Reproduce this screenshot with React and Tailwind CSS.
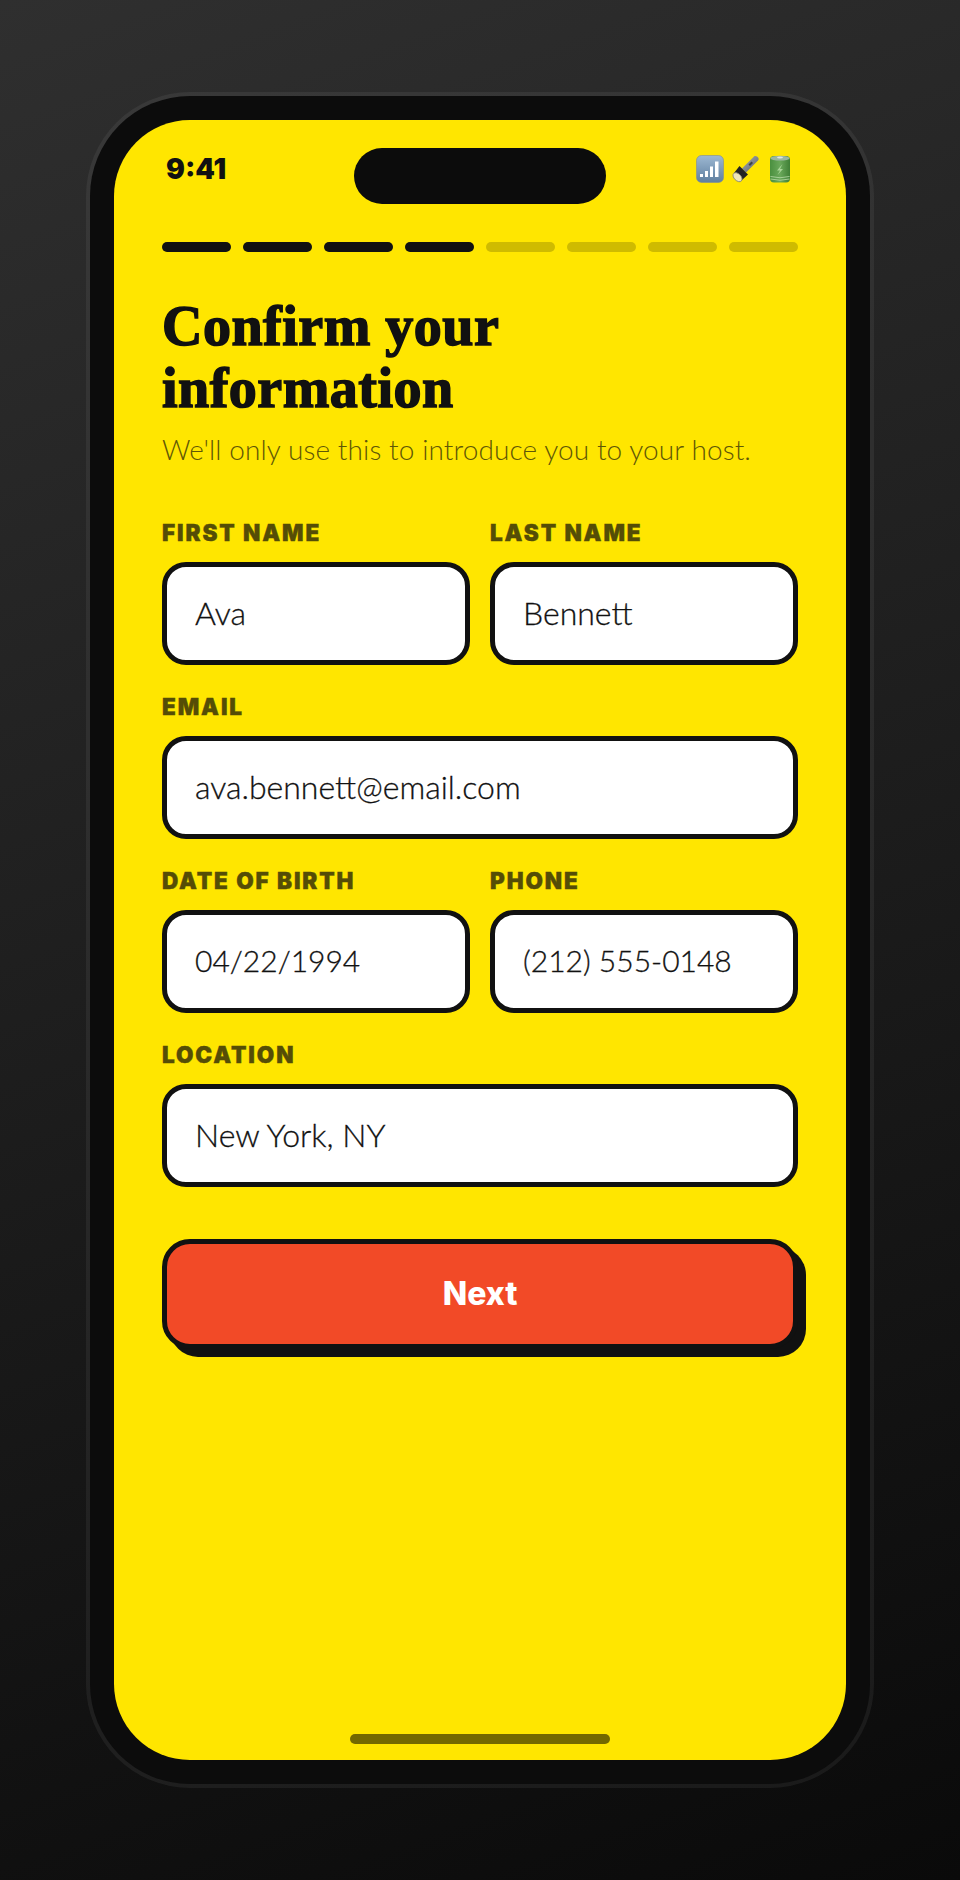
import { useState } from "react";

const steps = [true, true, true, true, false, false, false, false];

function SignalIcon() {
  return (
    <svg width="28" height="28" viewBox="0 0 28 28">
      <defs>
        <linearGradient id="sig" x1="0" y1="0" x2="0" y2="1">
          <stop offset="0" stopColor="#9db8d2" />
          <stop offset="1" stopColor="#5f7f9f" />
        </linearGradient>
      </defs>
      <rect x="0.5" y="0.5" width="27" height="27" rx="5" fill="url(#sig)" stroke="#7d8c9c" strokeWidth="0.6" />
      <rect x="4" y="19" width="3" height="3" fill="#fff" />
      <rect x="9" y="16" width="3" height="6" fill="#fff" />
      <rect x="14" y="11.5" width="3" height="10.5" fill="#fff" />
      <rect x="19" y="6.5" width="3.5" height="15.5" fill="#fff" />
    </svg>
  );
}

function FlashlightIcon() {
  return (
    <svg width="28" height="28" viewBox="0 0 28 28">
      <defs>
        <linearGradient id="torch" x1="0" y1="0" x2="1" y2="1">
          <stop offset="0" stopColor="#a9aeb4" />
          <stop offset="1" stopColor="#596068" />
        </linearGradient>
      </defs>
      <path d="M11 13.5 L23.5 1 Q26 0.5 27.5 3 Q28 4.5 27 5.5 L15 17.5 Z" fill="url(#torch)" />
      <path d="M17.5 9.5 L20.5 6.5 L22 8 L19 11 Z" fill="#3f444a" />
      <path d="M8.5 11 L17 19.5 L10.5 25.5 L3 18 Z" fill="#232323" />
      <ellipse cx="6.5" cy="22.2" rx="5.4" ry="3.4" fill="#efe7b9" stroke="#8b8a7c" strokeWidth="0.9" transform="rotate(45 6.5 22.2)" />
    </svg>
  );
}

function BatteryIcon() {
  return (
    <svg width="28" height="28" viewBox="0 0 28 28">
      <defs>
        <linearGradient id="batt" x1="0" y1="0" x2="1" y2="0">
          <stop offset="0" stopColor="#4a8f3f" />
          <stop offset="0.5" stopColor="#6aa85a" />
          <stop offset="1" stopColor="#3f7f36" />
        </linearGradient>
      </defs>
      <rect x="4" y="1" width="20" height="26.5" rx="4" fill="url(#batt)" />
      <ellipse cx="14" cy="3.2" rx="9.5" ry="2.4" fill="#9bb7a0" />
      <ellipse cx="14" cy="2.6" rx="3" ry="1" fill="#dfe6df" />
      <path d="M16.5 9 L11 15.5 L14 15.5 L11.5 20 L17 14 L14 14 Z" fill="#a8d497" />
      <path d="M4.5 21.5 Q14 24 23.5 21.5 M4.5 24 Q14 26.5 23.5 24" fill="none" stroke="#b9dbaa" strokeWidth="0.8" />
    </svg>
  );
}

function Field({ label, value, onChange, digits }) {
  return (
    <label className="block min-w-0 flex-1">
      <span className="mb-[14px] block font-['Inter',sans-serif] text-[22.5px] leading-[30px] font-black tracking-[1.9px] text-[#554d06] uppercase [-webkit-text-stroke:0.4px_#554d06]">
        {label}
      </span>
      <input
        value={value}
        onChange={(e) => onChange(e.target.value)}
        className={
          digits
            ? "h-[103px] w-full rounded-[24px] border-[5px] border-[#111] bg-white px-[28px] pb-[3px] text-[30px] font-light text-[#111] outline-none [-webkit-text-stroke:0.3px_#111]"
            : "h-[103px] w-full rounded-[24px] border-[5px] border-[#111] bg-white px-[28px] pb-[3px] text-[32px] font-light text-[#111] outline-none [-webkit-text-stroke:0.3px_#111]"
        }
      />
    </label>
  );
}

export default function App() {
  const [form, setForm] = useState({
    first: "Ava",
    last: "Bennett",
    email: "ava.bennett@email.com",
    dob: "04/22/1994",
    phone: "(212) 555-0148",
    location: "New York, NY",
  });

  const set = (field) => (value) => setForm((prev) => ({ ...prev, [field]: value }));

  return (
    <div className="flex min-h-[1880px] items-center justify-center bg-[linear-gradient(160deg,#2f2f2f_0%,#0a0a0a_100%)] font-['Lato',sans-serif]">
      <div className="h-[1688px] w-[780px] rounded-[100px] bg-[#0c0c0c] p-[24px] shadow-[0_0_0_4px_rgba(255,255,255,0.06)]">
        <div className="relative flex h-full flex-col overflow-hidden rounded-[76px] bg-[#ffe600] px-[48px]">
          <div className="absolute top-[28px] left-[240px] h-[56px] w-[252px] rounded-full bg-[#0c0c0c]" />

          <div className="flex h-[98px] items-center justify-between pr-[4px] pl-[4px]">
            <span className="font-['Inter',sans-serif] text-[28px] leading-none font-black text-[#111]">9:41</span>
            <div className="flex items-center gap-[7px]">
              <SignalIcon />
              <FlashlightIcon />
              <BatteryIcon />
            </div>
          </div>

          <div className="mt-[24px] flex gap-[12px]">
            {steps.map((done, i) => (
              <div
                key={i}
                className={done ? "h-[10px] flex-1 rounded-full bg-[#111]" : "h-[10px] flex-1 rounded-full bg-[#cfbb00]"}
              />
            ))}
          </div>

          <h1 className="mt-[43px] font-['Liberation_Serif',serif] text-[56px] leading-[62px] font-bold tracking-[0.5px] text-[#111] [-webkit-text-stroke:1.5px_#111]">
            Confirm your
            <br />
            information
          </h1>
          <p className="mt-[11px] text-[28px] leading-[38px] font-light tracking-[0.1px] text-[#5f5706]">
            We'll only use this to introduce you to your host.
          </p>

          <div className="mt-[50px] flex flex-col gap-[27px]">
            <div className="flex gap-[20px]">
              <Field label="First name" value={form.first} onChange={set("first")} />
              <Field label="Last name" value={form.last} onChange={set("last")} />
            </div>
            <Field label="Email" value={form.email} onChange={set("email")} />
            <div className="flex gap-[20px]">
              <Field label="Date of birth" value={form.dob} onChange={set("dob")} digits />
              <Field label="Phone" value={form.phone} onChange={set("phone")} digits />
            </div>
            <Field label="Location" value={form.location} onChange={set("location")} />
          </div>

          <button
            type="button"
            className="mt-[52px] h-[110px] w-full rounded-[28px] border-[5px] border-[#111] bg-[#f24a27] font-['Inter',sans-serif] text-[32px] font-extrabold text-white shadow-[8px_8px_0_#111]"
          >
            Next
          </button>

          <div className="absolute bottom-[16px] left-[236px] h-[10px] w-[260px] rounded-full bg-[#736800]" />
        </div>
      </div>
    </div>
  );
}
